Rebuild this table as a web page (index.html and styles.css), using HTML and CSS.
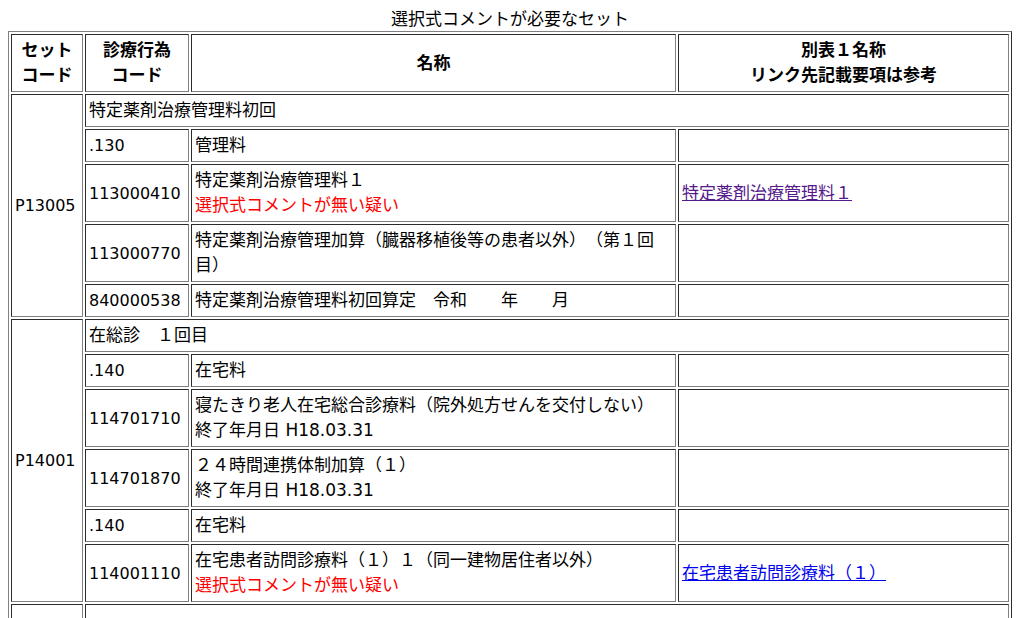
FILE: index.html
```html
<!DOCTYPE html>
<html lang="ja">
<head>
<meta charset="utf-8">
<title>選択式コメントが必要なセット</title>
<link rel="stylesheet" href="styles.css">
</head>
<body>
<table class="sets">
  <caption class="sets-title">選択式コメントが必要なセット</caption>
  <thead>
    <tr>
      <th class="col-set">セット<br>コード</th>
      <th class="col-code">診療行為<br>コード</th>
      <th class="col-name">名称</th>
      <th class="col-ref">別表１名称<br>リンク先記載要項は参考</th>
    </tr>
  </thead>
  <tbody>
    <tr>
      <td class="set-code" rowspan="5">P13005</td>
      <td colspan="3">特定薬剤治療管理料初回</td>
    </tr>
    <tr>
      <td class="code">.130</td>
      <td>管理料</td>
      <td></td>
    </tr>
    <tr>
      <td class="code">113000410</td>
      <td>特定薬剤治療管理料１<br><span class="warn">選択式コメントが無い疑い</span></td>
      <td><a class="ref-link visited" href="#">特定薬剤治療管理料１</a></td>
    </tr>
    <tr>
      <td class="code">113000770</td>
      <td>特定薬剤治療管理加算（臓器移植後等の患者以外）（第１回目）</td>
      <td></td>
    </tr>
    <tr>
      <td class="code">840000538</td>
      <td>特定薬剤治療管理料初回算定　令和　　年　　月</td>
      <td></td>
    </tr>
    <tr>
      <td class="set-code" rowspan="6">P14001</td>
      <td colspan="3">在総診　１回目</td>
    </tr>
    <tr>
      <td class="code">.140</td>
      <td>在宅料</td>
      <td></td>
    </tr>
    <tr>
      <td class="code">114701710</td>
      <td>寝たきり老人在宅総合診療料（院外処方せんを交付しない）<br>終了年月日 H18.03.31</td>
      <td></td>
    </tr>
    <tr>
      <td class="code">114701870</td>
      <td>２４時間連携体制加算（１）<br>終了年月日 H18.03.31</td>
      <td></td>
    </tr>
    <tr>
      <td class="code">.140</td>
      <td>在宅料</td>
      <td></td>
    </tr>
    <tr>
      <td class="code">114001110</td>
      <td>在宅患者訪問診療料（１）１（同一建物居住者以外）<br><span class="warn">選択式コメントが無い疑い</span></td>
      <td><a class="ref-link" href="#">在宅患者訪問診療料（１）</a></td>
    </tr>
    <tr>
      <td class="set-code" rowspan="2">&nbsp;</td>
      <td colspan="3">&nbsp;</td>
    </tr>
    <tr>
      <td class="code">&nbsp;</td>
      <td>&nbsp;</td>
      <td></td>
    </tr>
  </tbody>
</table>
</body>
</html>
```

FILE: styles.css
```css
html, body {
  background: #ffffff;
}

body {
  margin: 8px;
  color: #000000;
  font-family: "DejaVu Sans", "Noto Sans CJK JP", sans-serif;
  font-size: 17px;
  text-spacing-trim: space-all;
}

.sets {
  width: 100%;
  table-layout: fixed;
  border-collapse: separate;
  border-spacing: 2px;
  border: 1px outset #808080;
}

.sets-title {
  caption-side: top;
  text-align: center;
  line-height: 23px;
  font-weight: normal;
}

.sets th,
.sets td {
  box-sizing: border-box;
  border: 1px inset #808080;
  padding: 3px 3px;
  line-height: 25px;
  vertical-align: middle;
}

.sets th {
  font-weight: bold;
  text-align: center;
}

.sets td {
  text-align: left;
}

.col-set {
  width: 72px;
}

.col-code {
  width: 104px;
}

.col-name {
  width: 485px;
}

.set-code,
.code {
  font-size: 16px;
}

.warn {
  color: #ff0000;
}

.ref-link {
  color: #0000ee;
  text-decoration: underline;
}

.ref-link.visited {
  color: #551a8b;
}
```
